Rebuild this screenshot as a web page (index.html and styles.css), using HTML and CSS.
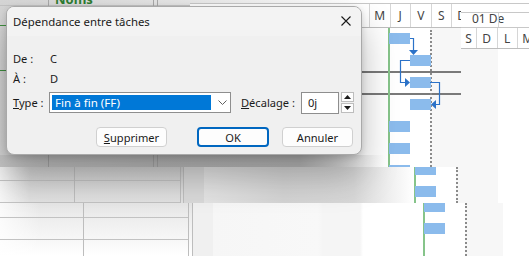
FILE: index.html
```html
<!DOCTYPE html>
<html lang="fr">
<head>
<meta charset="utf-8">
<link rel="stylesheet" href="styles.css">
</head>
<body>
<div class="desk">
  <div class="win win-a">
    <div class="sheet-top"><span class="noms">Noms</span></div>
    <div class="sheet-bottom"></div>
    <div class="vline" style="left:48px;top:0;height:6px"></div>
    <div class="vline" style="left:153px;top:0;height:6px"></div>
    <div class="vline" style="left:157px;top:0;height:6px"></div>
    <div class="vline" style="left:48px;top:155px;height:12px"></div>
    <div class="vline" style="left:153px;top:155px;height:12px"></div>
    <div class="vline" style="left:157px;top:155px;height:12px"></div>
    <div class="gline" style="top:25px"></div>
    <div class="gline" style="top:70px"></div>
    <div class="gantt-head">
      <span class="day">M</span><span class="day">J</span><span class="day">V</span><span class="day">S</span><span class="day">D</span>
    </div>
    <div class="shade" style="left:430px;top:28px;width:31px;height:139px"></div>
    <div class="darkline" style="top:71px"></div>
    <div class="darkline" style="top:93px"></div>
    <div class="today" style="left:388px;top:28px;height:139px"></div>
    <div class="dots" style="left:430px;top:30px;height:137px"></div>
    <div class="bar" style="left:389px;top:33px"></div>
    <div class="bar" style="left:410px;top:55px"></div>
    <div class="bar" style="left:410px;top:77px"></div>
    <div class="bar" style="left:410px;top:99px"></div>
    <div class="bar" style="left:389px;top:121px"></div>
    <div class="bar" style="left:389px;top:143px"></div>
    <div class="bar" style="left:389px;top:165px"></div>
    <svg class="links" width="461" height="167" viewBox="0 0 461 167">
      <path d="M410 38.5H413.5V52" fill="none" stroke="#2b72c8" stroke-width="1.2"/>
      <path d="M409 50L413.5 55L418 50Z" fill="#2b72c8"/>
      <path d="M410 60.5H400.5V82.5H406" fill="none" stroke="#2b72c8" stroke-width="1.2"/>
      <path d="M405 78L410 82.5L405 87Z" fill="#2b72c8"/>
      <path d="M430 82.5H439.5V104.5H434" fill="none" stroke="#2b72c8" stroke-width="1.2"/>
      <path d="M436 100L431 104.5L436 109Z" fill="#2b72c8"/>
    </svg>
  </div>

  <div class="win win-d">
    <div class="d-top"></div>
    <div class="d-month"><span class="month">01 De</span><span class="msep"></span></div>
    <div class="d-days"><span class="dd">S</span><span class="dd">D</span><span class="dd">L</span><span class="dd">M</span></div>
    <div class="d-body"></div>
  </div>

  <div class="win win-b">
    <div class="hline" style="top:13px"></div>
    <div class="hline" style="top:35px"></div>
    <div class="vline" style="left:74px;top:0;height:36px"></div>
    <div class="vline" style="left:180px;top:0;height:36px"></div>
    <div class="vline" style="left:183px;top:0;height:36px"></div>
    <div class="strip" style="left:184px;width:20px"></div>
    <div class="gantt-b"></div>
    <div class="shade" style="left:456px;top:0;width:42px;height:36px"></div>
    <div class="today" style="left:414px;top:0;height:36px"></div>
    <div class="dots" style="left:456px;top:0;height:36px"></div>
    <div class="bar" style="left:415px;top:-3px"></div>
    <div class="bar" style="left:415px;top:19px"></div>
  </div>

  <div class="win win-c">
    <div class="hline" style="top:14px"></div>
    <div class="hline" style="top:36px"></div>
    <div class="vline" style="left:83px;top:0;height:53px"></div>
    <div class="vline" style="left:188px;top:0;height:53px"></div>
    <div class="vline" style="left:192px;top:0;height:53px"></div>
    <div class="strip light" style="left:193px;width:20px"></div>
    <div class="gantt-c"></div>
    <div class="shade" style="left:465px;top:0;width:38px;height:53px"></div>
    <div class="today" style="left:423px;top:0;height:53px"></div>
    <div class="dots" style="left:465px;top:0;height:53px"></div>
    <div class="bar" style="left:424px;top:-2px"></div>
    <div class="bar" style="left:424px;top:20px"></div>
  </div>

  <div class="dialog">
    <div class="titlebar">
      <span class="title">Dépendance entre tâches</span>
      <svg class="close" width="10" height="10" viewBox="0 0 10 10"><path d="M0.5 0.5L9.5 9.5M9.5 0.5L0.5 9.5" stroke="#1a1a1a" stroke-width="1.1"/></svg>
    </div>
    <div class="dbody">
      <div class="info"><span class="lbl">De :</span><span class="val">C</span></div>
      <div class="info"><span class="lbl">À :</span><span class="val">D</span></div>
      <div class="typerow">
        <span class="tlbl"><u>T</u>ype :</span>
        <div class="combo">
          <span class="sel">Fin à fin (FF)</span>
          <svg class="chev" width="9" height="5" viewBox="0 0 9 5"><path d="M0.5 0.5L4.5 4.5L8.5 0.5" fill="none" stroke="#606060" stroke-width="1"/></svg>
        </div>
        <span class="declbl"><u>D</u>écalage :</span>
        <div class="spinbox">0j</div>
        <div class="spin">
          <div class="sbtn"><svg width="7" height="4" viewBox="0 0 7 4"><path d="M0 4L3.5 0L7 4Z" fill="#1a1a1a"/></svg></div>
          <div class="sbtn"><svg width="7" height="4" viewBox="0 0 7 4"><path d="M0 0L3.5 4L7 0Z" fill="#1a1a1a"/></svg></div>
        </div>
      </div>
      <div class="btnrow">
        <div class="btn"><u>S</u>upprimer</div>
        <div class="btn ok">OK</div>
        <div class="btn">Annuler</div>
      </div>
    </div>
  </div>
</div>
</body>
</html>
```

FILE: styles.css
```css
* { box-sizing: border-box; }
html, body { margin: 0; padding: 0; }
body {
  width: 529px;
  height: 256px;
  overflow: hidden;
  background: #ffffff;
  font-family: "Noto Sans", "Open Sans", sans-serif;
  font-size: 11.1px;
  color: #1a1a1a;
}
.desk {
  position: relative;
  width: 529px;
  height: 256px;
  overflow: hidden;
}
.win {
  position: absolute;
  overflow: hidden;
  background: #ffffff;
}
.win-a { left: 0; top: 0; width: 461px; height: 167px; z-index: 1;
  background: linear-gradient(to right, #d6d6d6 0, #e6e6e6 180px, #ffffff 362px);
}
.win-d { left: 461px; top: 0; width: 68px; height: 167px; z-index: 2; background: #ffffff; }
.win-b { left: 0; top: 167px; width: 529px; height: 36px; z-index: 3;
  background:
    linear-gradient(to right, rgba(255,255,255,0.75) 0, rgba(255,255,255,0) 30px),
    linear-gradient(#cfcfcf, #e2e2e2);
}
.win-c { left: 0; top: 203px; width: 529px; height: 53px; z-index: 4;
  background:
    linear-gradient(to right, rgba(255,255,255,0.8) 0, rgba(255,255,255,0) 40px),
    linear-gradient(#e6e6e6, #ffffff);
}
.gantt-b {
  position: absolute; left: 204px; top: 0; width: 325px; height: 36px;
  background: linear-gradient(to right, #e4e4e4 0, #d4d4d4 80px, #d8d8d8 150px, #ffffff 210px);
}
.gantt-c {
  position: absolute; left: 213px; top: 0; width: 316px; height: 53px;
  background: linear-gradient(to right, #f6f6f6 0, #f8f8f8 105px, #f5f5f5 110px, #f5f5f5 147px, #ffffff 150px);
}

.sheet-top {
  position: absolute; left: 0; top: 0; width: 362px; height: 6px;
  border-bottom: 1px solid #c4c4c4;
}
.sheet-bottom {
  position: absolute; left: 0; top: 155px; width: 388px; height: 12px;
  background: linear-gradient(to right, #c8c8c8 0, #bdbdbd 150px, #bababa 300px, #ffffff 385px);
}
.noms {
  position: absolute; left: 55px; top: -10px;
  color: #2e7d32; font-weight: bold; font-size: 13px;
}
.vline { position: absolute; width: 1px; background: #bdbdbd; }
.win-a .vline { background: #a9a9a9; }
.hline { position: absolute; left: 0; width: 181px; height: 1px; background: #c2c2c2; }
.win-c .hline { width: 189px; }
.gline { position: absolute; left: 0; width: 8px; height: 1px; background: #3f8f3f; }
.strip { position: absolute; top: 0; bottom: 0; background: #d9d9d9; }
.strip.light { background: #f0f0f0; }

.gantt-head {
  position: absolute; left: 190px; top: 3px; width: 271px; height: 25px;
  border-top: 1px solid #c8c8c8;
  border-bottom: 1px solid #bdbdbd;
  background: #ffffff;
  display: flex; padding-left: 179px;
}
.day {
  width: 20.5px; flex: none;
  border-left: 1px solid #d6d6d6;
  display: flex; align-items: center; justify-content: center;
  color: #444; font-size: 12px;
}
.shade { position: absolute; background: #f7f7f7; }
.darkline { position: absolute; left: 190px; width: 271px; height: 2px; background: #7a7a7a; }
.today { position: absolute; width: 2px; background: #86c48a; }
.dots { position: absolute; width: 0; border-left: 2px dotted #8a8a8a; }
.bar { position: absolute; width: 21px; height: 11px; background: #8bbbec; }
.links { position: absolute; left: 0; top: 0; }

.d-top { margin-top: 3px; height: 10px; border-top: 1px solid #c8c8c8; border-bottom: 1px solid #c8c8c8; }
.d-month { height: 14px; position: relative; }
.month { display: block; color: #444; font-size: 12px; line-height: 11px; padding-left: 11px; white-space: nowrap; }
.msep { position: absolute; left: 37px; top: 0; width: 1px; height: 14px; background: #d6d6d6; }
.d-days { height: 22px; display: flex; border-top: 1px solid #c8c8c8; border-bottom: 1px solid #bdbdbd; }
.dd { width: 20.5px; flex: none; border-right: 1px solid #d6d6d6; display: flex; align-items: center; justify-content: center; color: #444; font-size: 12px; }
.dd:first-child { width: 16px; }
.d-body { width: 37px; height: 119px; background: #f7f7f7; }

.dialog {
  position: absolute; left: 6px; top: 6px; width: 356px; height: 149px;
  z-index: 10;
  background: #f0f0f0;
  border: 1px solid #a9a9a9;
  border-radius: 8px;
  overflow: hidden;
  box-shadow: 0 20px 36px rgba(0,0,0,0.28), 0 2px 6px rgba(0,0,0,0.15);
}
.titlebar {
  height: 29px; background: #f3f3f3;
  display: flex; align-items: center; justify-content: space-between;
  padding: 0 10px 0 6px;
}
.title { font-size: 11.4px; }
.close { display: block; margin-top: -1px; }
.dbody { padding: 12px 6px 0 6px; display: flex; flex-direction: column; }
.info { height: 20px; display: flex; align-items: center; }
.lbl { width: 37px; }
.typerow { display: flex; align-items: center; height: 23px; margin-top: 3px; }
.tlbl { width: 36px; }
.combo {
  width: 182px; height: 21px; background: #fff;
  border: 1px solid #8e8e8e;
  display: flex; align-items: center; padding: 2px;
}
.sel {
  width: 159px; height: 15px; background: #0078d7; color: #fff;
  line-height: 15px; padding-left: 3px; font-size: 11.6px;
}
.chev { margin-left: 7px; }
.declbl { margin-left: 10px; width: 60px; }
.spinbox {
  width: 38px; height: 22px; background: #fff; border: 1px solid #8e8e8e;
  padding-left: 6px; line-height: 19px;
}
.spin { margin-left: 2px; display: flex; flex-direction: column; gap: 1px; }
.sbtn {
  width: 13px; height: 10px; background: #fdfdfd; border: 1px solid #bdbdbd;
  display: flex; align-items: center; justify-content: center;
}
.sbtn svg { display: block; }
.btnrow { display: flex; margin-top: 13px; padding-left: 83px; }
.btn {
  width: 71px; height: 20px; background: #fdfdfd;
  border: 1px solid #d0d0d0; border-radius: 4px;
  display: flex; align-items: center; justify-content: center;
}
.btn.ok { margin-left: 30px; width: 72px; border: 2px solid #0067c0; }
.btn.ok + .btn { margin-left: 13px; }
```
